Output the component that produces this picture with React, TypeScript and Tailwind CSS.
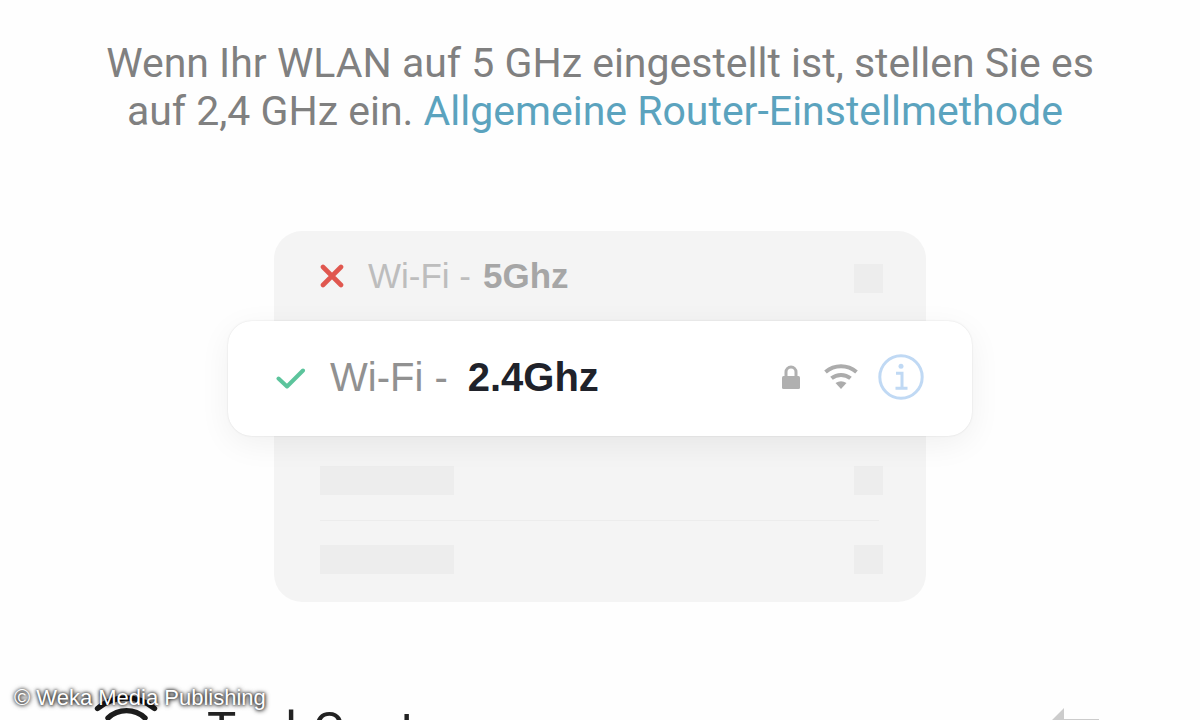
import React from 'react';

const CrossIcon = () => (
  <svg viewBox="0 0 24 24" className="w-6 h-6 shrink-0" fill="none" stroke="#e0574f" strokeWidth="4.6" strokeLinecap="round">
    <path d="M3 3 21 21M21 3 3 21" />
  </svg>
);

const CheckIcon = () => (
  <svg viewBox="0 0 30 24" className="w-[30px] h-6 shrink-0" fill="none" stroke="#5cc49c" strokeWidth="4" strokeLinecap="round" strokeLinejoin="round">
    <path d="M2.5 13.5 11 21.5 27 5.5" />
  </svg>
);

const LockIcon = () => (
  <svg viewBox="0 0 18 24" className="w-[18px] h-6 shrink-0">
    <path d="M4 12V7a5 5 0 0 1 10 0V12" fill="none" stroke="#b0b0b0" strokeWidth="3" />
    <rect x="0" y="11" width="18" height="13" rx="1.5" fill="#b0b0b0" />
  </svg>
);

const SignalIcon = () => (
  <svg viewBox="0 0 34 26" className="w-[34px] h-[26px] shrink-0" fill="none" stroke="#acacac" strokeWidth="4">
    <path d="M1.5 8a24 24 0 0 1 31 0" />
    <path d="M7.5 14.3a15 15 0 0 1 19 0" />
    <path d="M11.5 19.1a9.5 9.5 0 0 1 11 0L17 25z" fill="#acacac" stroke="none" />
  </svg>
);

const InfoIcon = () => (
  <svg viewBox="0 0 46 46" className="w-[46px] h-[46px]" fill="none" stroke="#c0d9f4" strokeWidth="3">
    <circle cx="23" cy="23" r="21.2" />
    <circle cx="23" cy="12.3" r="2.5" fill="#c0d9f4" stroke="none" />
    <path d="M18 19.3h6v15M17.5 34.3h12" />
  </svg>
);

const NetworkIcon = () => (
  <svg viewBox="0 0 66 52" className="w-[66px] h-[52px] shrink-0" fill="none" stroke="#1c1c1c" strokeWidth="5.4" strokeLinecap="round">
    <path d="M4.5 16.5a44 44 0 0 1 57 0" />
    <path d="M15 26a27 27 0 0 1 37 0" />
    <path d="M23.5 36a14 14 0 0 1 19 0" />
    <circle cx="33" cy="45" r="3" fill="#1c1c1c" stroke="none" />
  </svg>
);

const SwapIcon = () => (
  <svg viewBox="0 0 54 40" className="w-[54px] h-10" fill="#cccccc">
    <path d="M0 14 14 0v11h35v3zM54 26 40 40V29H5v-3z" />
  </svg>
);

const PlaceholderRow = () => (
  <div className="flex justify-between">
    <div className="w-[134px] h-[29px] bg-black/[0.028]" />
    <div className="w-[29px] h-[29px] bg-black/[0.028]" />
  </div>
);

const App = () => {
  return (
    <div className="relative h-screen overflow-hidden bg-[#fefefe] font-['Roboto',sans-serif]">
      <main className="flex flex-col items-center pt-[39px]">
        <p className="max-w-[1020px] text-center text-[41px] leading-[48px] text-[#808080]">
          Wenn Ihr WLAN auf 5 GHz eingestellt ist, stellen Sie es auf 2,4 GHz ein.{' '}
          <a href="#router" className="text-[#5ba3be]">Allgemeine Router-Einstellmethode</a>
          {'\u00a0'}
        </p>

        <section className="mt-24 w-[652px] max-w-full rounded-[28px] bg-[#f4f4f4] font-['Liberation_Sans',Arial,sans-serif]">
          <div className="flex items-center h-[90px] pl-[46px] pr-[43px] text-[35px] text-[#bdbdbd]">
            <CrossIcon />
            <span className="ml-6">Wi-Fi -</span>
            <strong className="ml-3 text-[#a6a6a6]">5Ghz</strong>
            <div className="ml-auto mt-1 w-[29px] h-[29px] bg-black/[0.028]" />
          </div>

          {/* Selected network, wider than the list behind it */}
          <div className="relative -mx-[46px] flex items-center h-[115px] px-12 pb-1 rounded-3xl bg-white text-[40px] text-[#919191] shadow-[0_0_2px_rgba(0,0,0,0.12),0_8px_32px_rgba(0,0,0,0.06)]">
            <CheckIcon />
            <span className="ml-6">Wi-Fi -</span>
            <strong className="ml-5 text-[#20222a]">2.4Ghz</strong>
            <div className="ml-auto flex items-center">
              <LockIcon />
              <div className="ml-6">
                <SignalIcon />
              </div>
              <button type="button" aria-label="Info" className="ml-5">
                <InfoIcon />
              </button>
            </div>
          </div>

          <div className="pt-[30px] pb-7 pl-[46px] pr-[43px]">
            <PlaceholderRow />
            <div className="mt-[25px] mb-6 mr-1 h-px bg-[#ececec]" />
            <PlaceholderRow />
          </div>
        </section>

        <div className="mt-[90px] flex items-start self-stretch pl-[93px] pr-24 text-[#222222]">
          <NetworkIcon />
          <span className="ml-12 mt-2 text-[49px] leading-[60px]">TechCont</span>
          <button type="button" aria-label="Netzwerk wechseln" className="ml-auto mt-4">
            <SwapIcon />
          </button>
        </div>
      </main>

      <span className="absolute bottom-2 left-3.5 font-['Liberation_Sans',Arial,sans-serif] text-[22px] leading-7 text-white [text-shadow:0_0_3px_rgba(0,0,0,0.8),0_0_5px_rgba(0,0,0,0.7),1px_1px_4px_rgba(0,0,0,0.5)]">
        © Weka Media Publishing
      </span>
    </div>
  );
};

export default App;
